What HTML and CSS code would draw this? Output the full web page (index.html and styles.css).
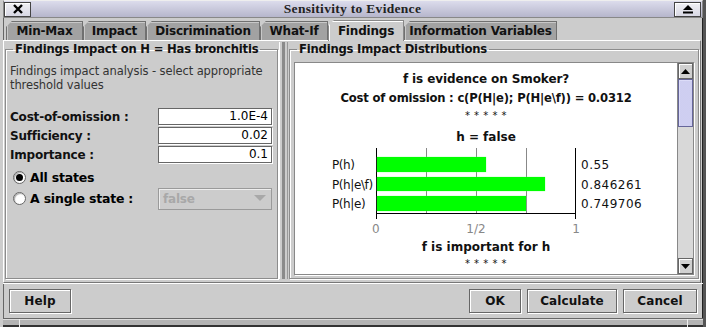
FILE: index.html
```html
<!DOCTYPE html>
<html>
<head>
<meta charset="utf-8">
<link rel="stylesheet" href="styles.css">
</head>
<body>
<div class="window">
  <div class="titlebar">
    <div class="tbtn close"><svg width="12" height="10" viewBox="0 0 12 10"><path d="M2 1 L10 9 M10 1 L2 9" stroke="#000" stroke-width="2.4"/></svg></div>
    <div class="title">Sensitivity to Evidence</div>
    <div class="tbtn eject"><svg width="12" height="10" viewBox="0 0 12 10"><path d="M6 1 L11 6 L1 6 Z" fill="#000"/><rect x="1" y="7.5" width="10" height="2" fill="#000"/></svg></div>
  </div>
  <div class="tabs">
    <div class="tab t1">Min-Max</div>
    <div class="tab t2">Impact</div>
    <div class="tab t3">Discrimination</div>
    <div class="tab t4">What-If</div>
    <div class="tab t5 sel">Findings</div>
    <div class="tab t6">Information Variables</div>
  </div>
  <div class="panel">
    <fieldset class="group left">
      <legend>Findings Impact on H = Has bronchitis</legend>
      <p class="desc">Findings impact analysis - select appropriate threshold values</p>
      <div class="form">
        <div class="lbl">Cost-of-omission :</div><div class="field">1.0E-4</div>
        <div class="lbl">Sufficiency :</div><div class="field">0.02</div>
        <div class="lbl">Importance :</div><div class="field">0.1</div>
      </div>
      <div class="radio-row r1"><span class="radio on"></span><span class="rtext">All states</span></div>
      <div class="radio-row r2"><span class="radio"></span><span class="rtext">A single state :</span>
        <div class="combo"><span>false</span><svg width="12" height="7" viewBox="0 0 12 7"><path d="M0 0 L12 0 L6 6 Z" fill="#a8a8a8"/></svg></div>
      </div>
    </fieldset>
    <div class="divider"></div>
    <fieldset class="group right">
      <legend>Findings Impact Distributions</legend>
      <div class="scrollpane">
        <div class="view">
          <div class="h1">f is evidence on Smoker?</div>
          <div class="h2">Cost of omission : c(P(H|e); P(H|e\f)) = 0.0312</div>
          <div class="stars">* * * * *</div>
          <div class="h3">h = false</div>
          <div class="chart">
            <div class="rlabels">
              <div>P(h)</div><div>P(h|e\f)</div><div>P(h|e)</div>
            </div>
            <div class="plot">
              <div class="bar" style="width:55%"></div>
              <div class="bar" style="width:84.6%"></div>
              <div class="bar" style="width:75%"></div>
            </div>
            <div class="rvalues">
              <div>0.55</div><div>0.846261</div><div>0.749706</div>
            </div>
            <div></div>
            <div class="ticks"><span>0</span><span>1/2</span><span>1</span></div>
            <div></div>
          </div>
          <div class="h4">f is important for h</div>
          <div class="stars s2">* * * * *</div>
        </div>
        <div class="scrollbar">
          <div class="sbtn"><svg width="9" height="5" viewBox="0 0 9 5"><path d="M0 5 L9 5 L4.5 0 Z" fill="#000"/></svg></div>
          <div class="thumb"></div>
          <div class="track"></div>
          <div class="sbtn"><svg width="9" height="5" viewBox="0 0 9 5"><path d="M0 0 L9 0 L4.5 5 Z" fill="#000"/></svg></div>
        </div>
      </div>
    </fieldset>
  </div>
  <div class="buttons">
    <div class="btn help">Help</div>
    <div class="spacer"></div>
    <div class="btn ok">OK</div>
    <div class="btn calc">Calculate</div>
    <div class="btn cancel">Cancel</div>
  </div>
  <div class="status"><div class="sgrip"></div><div class="smain"></div><div class="sgrip2"></div></div>
</div>
</body>
</html>
```
FILE: styles.css
```css
* { box-sizing: border-box; }
html, body { margin: 0; padding: 0; }
body {
  width: 706px; height: 327px; overflow: hidden;
  background: #cccccc;
  font-family: "DejaVu Sans", sans-serif;
  font-size: 12px;
  color: #000;
}
.window {
  width: 706px; height: 327px;
  background: #cccccc;
  display: flex; flex-direction: column;
  border-left: 3px solid #cccccc;
  border-right: 3px solid #555;
  box-shadow: inset 1px 0 0 #666, inset -1px 0 0 #222;
  position: relative;
}
.titlebar {
  height: 18px;
  display: flex; align-items: center;
  background: linear-gradient(#dcdcec, #b6b6cc);
  border: 1px solid #888;
  border-top-color: #eee;
}
.tbtn {
  width: 27px; height: 15px;
  background: linear-gradient(#f0f0f4, #d8d8e4);
  border: 1px solid #444;
  box-shadow: inset 1px 1px 0 #fff;
  display: flex; align-items: center; justify-content: center;
}
.eject { margin-right: 1px; }
.title {
  flex: 1; text-align: center;
  font-family: "Liberation Serif", serif;
  font-weight: bold;
  font-size: 13.5px;
  color: #222;
  letter-spacing: 0.3px;
}
.tabs {
  height: 20px; margin-top: 2px;
  display: flex; align-items: flex-end;
  padding-left: 3px;
  font-weight: bold;
  font-size: 12px;
}
.tab {
  height: 19px;
  background: #a2a2a2;
  border: 1px solid #707070;
  border-bottom: none;
  box-shadow: inset 1px 1px 0 #c8c8c8;
  clip-path: polygon(6px 0, 100% 0, 100% 100%, 0 100%, 0 6px);
  display: flex; align-items: center; justify-content: center;
  color: #111;
  letter-spacing: -0.2px;
}
.tab.sel {
  height: 21px;
  background: #cccccc;
  box-shadow: inset 1px 1px 0 #fff;
  border-color: #888;
  position: relative; top: 1px;
}
.t1 { width: 77px; }
.t2 { width: 63px; }
.t3 { width: 114px; }
.t4 { width: 68px; }
.t5 { width: 76px; }
.t6 { width: 153px; }
.panel {
  height: 243px;
  display: flex;
  margin-right: 2px;
  border-top: 1px solid #fff;
  border-left: 1px solid #fff;
  border-right: 1px solid #777;
  border-bottom: 1px solid #777;
  padding: 1px 1px 3px 1px;
}
fieldset.group {
  margin: 0; padding: 0 4px 3px 4px;
  border: 1px solid #8c8c8c;
  box-shadow: 1px 1px 0 #fff, inset 1px 1px 0 #fff;
  min-width: 0;
}
fieldset.group legend {
  font-weight: bold;
  font-size: 11.6px;
  letter-spacing: -0.2px;
  white-space: nowrap;
  padding: 0 2px;
  margin-left: 3px;
  line-height: 15px;
  color: #111;
}
.left { width: 273px; }
.desc {
  margin: 7px 0 0 0;
  color: #333;
  line-height: 14px;
  font-size: 11.5px;
  letter-spacing: -0.1px;
}
.form {
  margin-top: 16px;
  display: grid;
  grid-template-columns: 148px 114px;
  row-gap: 2px;
  align-items: center;
}
.lbl { font-weight: bold; font-size: 12px; color: #111; letter-spacing: -0.2px; }
.field {
  height: 17px;
  background: #fff;
  border: 1px solid #666;
  box-shadow: 1px 1px 0 #fff;
  text-align: right;
  padding-right: 3px;
  line-height: 15px;
  font-size: 12px;
}
.radio-row {
  display: flex; align-items: center;
  margin-left: 3px;
  font-weight: bold;
  letter-spacing: -0.2px;
}
.r1 { margin-top: 5px; height: 19px; }
.r2 { margin-top: 0; height: 23px; }
.radio {
  width: 13px; height: 13px; border-radius: 50%;
  border: 1px solid #666;
  background: #fff;
  box-shadow: inset 1px 1px 1px #aaa;
  margin-right: 4px;
  position: relative;
}
.radio.on::after {
  content: ""; position: absolute; left: 2px; top: 2px;
  width: 7px; height: 7px; border-radius: 50%; background: #000;
}
.rtext { font-size: 12.5px; }
.combo {
  margin-left: auto;
  margin-right: 1px;
  width: 114px; height: 22px;
  border: 1px solid #9a9a9a;
  box-shadow: inset 1px 1px 0 #eee;
  display: flex; align-items: center; justify-content: space-between;
  padding: 0 5px 0 4px;
  color: #a8a8a8;
  font-weight: bold;
  font-size: 12px;
}
.divider {
  width: 9px;
  margin: 0 1px;
  background-color: #cccccc;
  background-image: radial-gradient(circle at 1px 1px, #888 0.7px, transparent 0.9px);
  background-size: 2px 2px;
  background-position: 2px 0;
  background-clip: content-box;
  padding: 0 2px;
  border-left: 1px solid #fff;
  border-right: 1px solid #999;
}
.right { flex: 1; padding: 0 4px 1px 3px; }
.right legend { margin-left: 2px; }
.scrollpane {
  height: 213px;
  margin-top: 5px;
  display: flex;
  border: 1px solid #888;
  box-shadow: 1px 1px 0 #fff;
}
.view {
  flex: 1;
  background: #fff;
  display: flex; flex-direction: column; align-items: center;
  font-weight: bold;
  color: #111;
}
.h1 { margin-top: 7px; height: 19px; line-height: 19px; font-size: 12px; letter-spacing: -0.1px; }
.h2 { height: 20px; line-height: 19px; font-size: 11.6px; letter-spacing: -0.2px; }
.stars { height: 14px; line-height: 14px; font-size: 10px; font-weight: normal; letter-spacing: 0.5px; }
.h3 { margin-top: 4px; height: 21px; line-height: 21px; font-size: 12px; }
.chart {
  margin-top: 0;
  display: grid;
  grid-template-columns: 44px 200px 64px;
}
.rlabels, .rvalues {
  display: flex; flex-direction: column;
  padding-top: 8px;
  font-weight: normal;
  font-size: 12px;
  color: #111;
}
.rlabels div, .rvalues div { height: 19.5px; line-height: 19px; }
.rlabels { letter-spacing: -0.4px; }
.rvalues { padding-left: 5px; letter-spacing: 0.5px; }
.plot {
  height: 66px;
  border-left: 1px solid #000;
  border-right: 1px solid #000;
  border-bottom: 1px solid #000;
  background-image: linear-gradient(to right, transparent 49px, #888 49px, #888 50px, transparent 50px, transparent 99px, #888 99px, #888 100px, transparent 100px, transparent 149px, #888 149px, #888 150px, transparent 150px);
  padding-top: 9px;
  display: flex; flex-direction: column; gap: 5px;
  position: relative;
}
.plot::before, .plot::after {
  content: ""; position: absolute; bottom: -6px; width: 1px; height: 6px; background: #000;
}
.plot::before { left: -1px; }
.plot::after { right: -1px; }
.bar {
  height: 14.5px;
  background: #00ff00;
  box-shadow: 0 0 1px #7f7;
}
.ticks {
  display: flex; justify-content: space-between;
  margin: 7px -4px 0 -4px;
  font-weight: normal;
  color: #888;
  font-size: 12px;
  height: 16px;
}
.h4 { margin-top: -1px; height: 20px; line-height: 20px; font-size: 12px; }
.s2 { margin-top: 0; }
.scrollbar {
  width: 16px;
  display: flex; flex-direction: column;
  background: #d8d8d8;
  border-left: 1px solid #888;
}
.sbtn {
  height: 16px;
  background: #d0d0d0;
  border: 1px solid #666;
  box-shadow: inset 1px 1px 0 #fff;
  display: flex; align-items: center; justify-content: center;
}
.thumb {
  height: 48px;
  background-color: #a8a8d8;
  background-image: radial-gradient(circle at 1px 1px, #e4e4ff 0.6px, transparent 0.9px);
  background-size: 2px 2px;
  border: 1px solid #66669a;
  box-shadow: inset 1px 1px 0 #dcdcf8;
}
.track { flex: 1; }
.buttons {
  height: 35px;
  display: flex; align-items: center;
  gap: 6px;
  padding: 0 6px 0 6px;
  border-top: 1px solid #fff;
}
.spacer { flex: 1; }
.btn {
  height: 24px;
  border: 1px solid #666;
  box-shadow: inset 1px 1px 0 #fff, 1px 1px 0 #fff;
  display: flex; align-items: center; justify-content: center;
  font-weight: bold;
  font-size: 12px;
  color: #111;
  letter-spacing: 0.1px;
}
.help { width: 62px; }
.ok { width: 52px; }
.calc { width: 90px; }
.cancel { width: 74px; }
.status {
  flex: 1;
  display: flex;
  border-top: 1px solid #666;
  background: #b4b4b4;
  box-shadow: inset 0 1px 0 #ddd, inset 0 -2px 0 #333;
}
.sgrip { width: 17px; border-right: 1px solid #eee; }
.smain { flex: 1; }
.sgrip2 { width: 16px; border-left: 1px solid #eee; }
```
